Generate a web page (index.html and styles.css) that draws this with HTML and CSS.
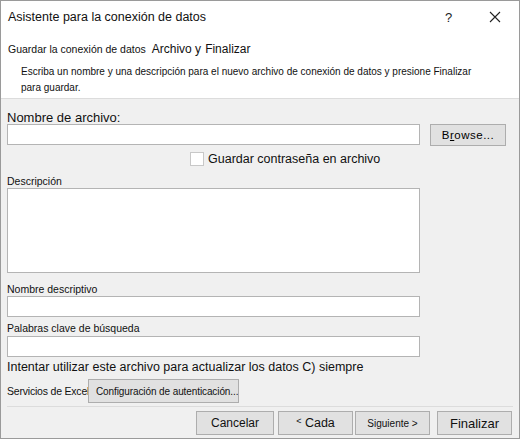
FILE: index.html
```html
<!DOCTYPE html>
<html lang="es">
<head>
<meta charset="utf-8">
<link rel="stylesheet" href="styles.css">
</head>
<body>
<div class="dialog">
  <div class="header">
    <div class="titlebar">
      <span class="title">Asistente para la conexión de datos</span>
      <span class="help">?</span>
      <span class="close"><svg width="12" height="12" viewBox="0 0 12 12"><path d="M1 1L11 11M11 1L1 11" stroke="#222" stroke-width="1.1" fill="none"/></svg></span>
    </div>
    <div class="step"><span class="step-a">Guardar la conexión de datos</span><span class="step-b">Archivo y</span><span class="step-c">Finalizar</span></div>
    <div class="instr">Escriba un nombre y una descripción para el nuevo archivo de conexión de datos y presione Finalizar<br>para guardar.</div>
  </div>
  <div class="body">
    <div class="lbl lbl-file">Nombre de archivo:</div>
    <div class="row">
      <div class="input"></div>
      <div class="btn browse">B<u>r</u>owse...</div>
    </div>
    <div class="check-row"><span class="box"></span><span class="check-lbl">Guardar contraseña en archivo</span></div>
    <div class="lbl small lbl-desc">Descripción</div>
    <div class="input textarea"></div>
    <div class="lbl small lbl-nd">Nombre descriptivo</div>
    <div class="input in-nd"></div>
    <div class="lbl small lbl-pc">Palabras clave de búsqueda</div>
    <div class="input in-pc"></div>
    <div class="lbl lbl-try">Intentar utilizar este archivo para actualizar los datos C) siempre</div>
    <div class="excel-row"><span class="small excel-lbl">Servicios de Excel</span><div class="btn auth">Configuración de autenticación...</div></div>
    <div class="sep"></div>
    <div class="footer">
      <div class="btn fbtn cancel">Cancelar</div>
      <div class="btn fbtn back"><span class="lt">&lt;</span>&nbsp;Cada</div>
      <div class="btn fbtn next">Siguiente &gt;</div>
      <div class="btn fbtn finish">Finalizar</div>
    </div>
  </div>
</div>
</body>
</html>
```
FILE: styles.css
```css
* { box-sizing: border-box; }
html, body { margin: 0; padding: 0; }
body { width: 520px; height: 439px; overflow: hidden; font-family: "Liberation Sans", Arial, sans-serif; color: #111; background: #fff; }
.dialog { width: 520px; height: 439px; border: 1px solid #9a9a9a; display: flex; flex-direction: column; background: #f0f0f0; overflow: hidden; }
.header { background: #fff; height: 98px; border-bottom: 1px solid #dcdcdc; padding: 0 0 0 7px; flex: none; }
.titlebar { display: flex; align-items: center; height: 32px; }
.title { font-size: 12.5px; flex: 1; }
.help { font-size: 13px; width: 44px; color: #222; }
.close { width: 30px; display: flex; align-items: center; }
.step { display: flex; align-items: baseline; margin-top: 8px; height: 16px; line-height: 16px; }
.step-a { font-size: 10.5px; }
.step-b { font-size: 12px; margin-left: 6px; }
.step-c { font-size: 12px; margin-left: 4px; }
.instr { font-size: 10px; line-height: 16px; padding-left: 13px; margin-top: 7px; }
.body { flex: 1; padding: 13px 0 0 6px; display: flex; flex-direction: column; }
.lbl { font-size: 13px; height: 12px; line-height: 12px; white-space: nowrap; }
.small { font-size: 10.5px; }
.row { display: flex; align-items: flex-start; }
.input { width: 413px; height: 21px; background: #fff; border: 1px solid #b4b4b4; flex: none; }
.btn { background: #e1e1e1; border: 1px solid #adadad; display: flex; align-items: center; justify-content: center; font-size: 12px; white-space: nowrap; }
.browse { width: 76px; height: 22px; margin-left: 10px; font-size: 11.5px; letter-spacing: 0.5px; color: #000; }
.check-row { display: flex; align-items: center; margin-top: 6px; padding-left: 183px; height: 14px; }
.box { width: 14px; height: 14px; background: #fff; border: 1px solid #c8c8c8; margin-right: 4px; }
.check-lbl { font-size: 12.5px; }
.lbl-desc { margin-top: 9px; }
.textarea { height: 85px; margin-top: 1px; }
.lbl-nd { margin-top: 10px; }
.in-nd { margin-top: 1px; }
.lbl-pc { margin-top: 5px; }
.in-pc { margin-top: 2px; }
.lbl-try { margin-top: 3px; height: 14px; line-height: 14px; font-size: 12.5px; }
.excel-row { display: flex; align-items: center; margin-top: 5px; height: 24px; }
.excel-lbl { width: 81px; white-space: nowrap; overflow: hidden; letter-spacing: -0.2px; }
.auth { height: 24px; width: 151px; font-size: 10px; letter-spacing: -0.1px; justify-content: flex-start; padding-left: 7px; overflow: hidden; }
.sep { height: 1px; background: #dcdcdc; margin: 3px 6px 0 0; flex: none; }
.footer { display: flex; margin-top: 4px; padding-left: 189px; }
.fbtn { height: 24px; width: 77px; }
.cancel { width: 78px; font-size: 12px; }
.back { margin-left: 4px; width: 75px; font-size: 12.5px; }
.lt { font-size: 9px; position: relative; top: -2px; }
.next { margin-left: 2px; width: 75px; font-size: 10px; }
.finish { margin-left: 7px; width: 75px; font-size: 13px; }
```
